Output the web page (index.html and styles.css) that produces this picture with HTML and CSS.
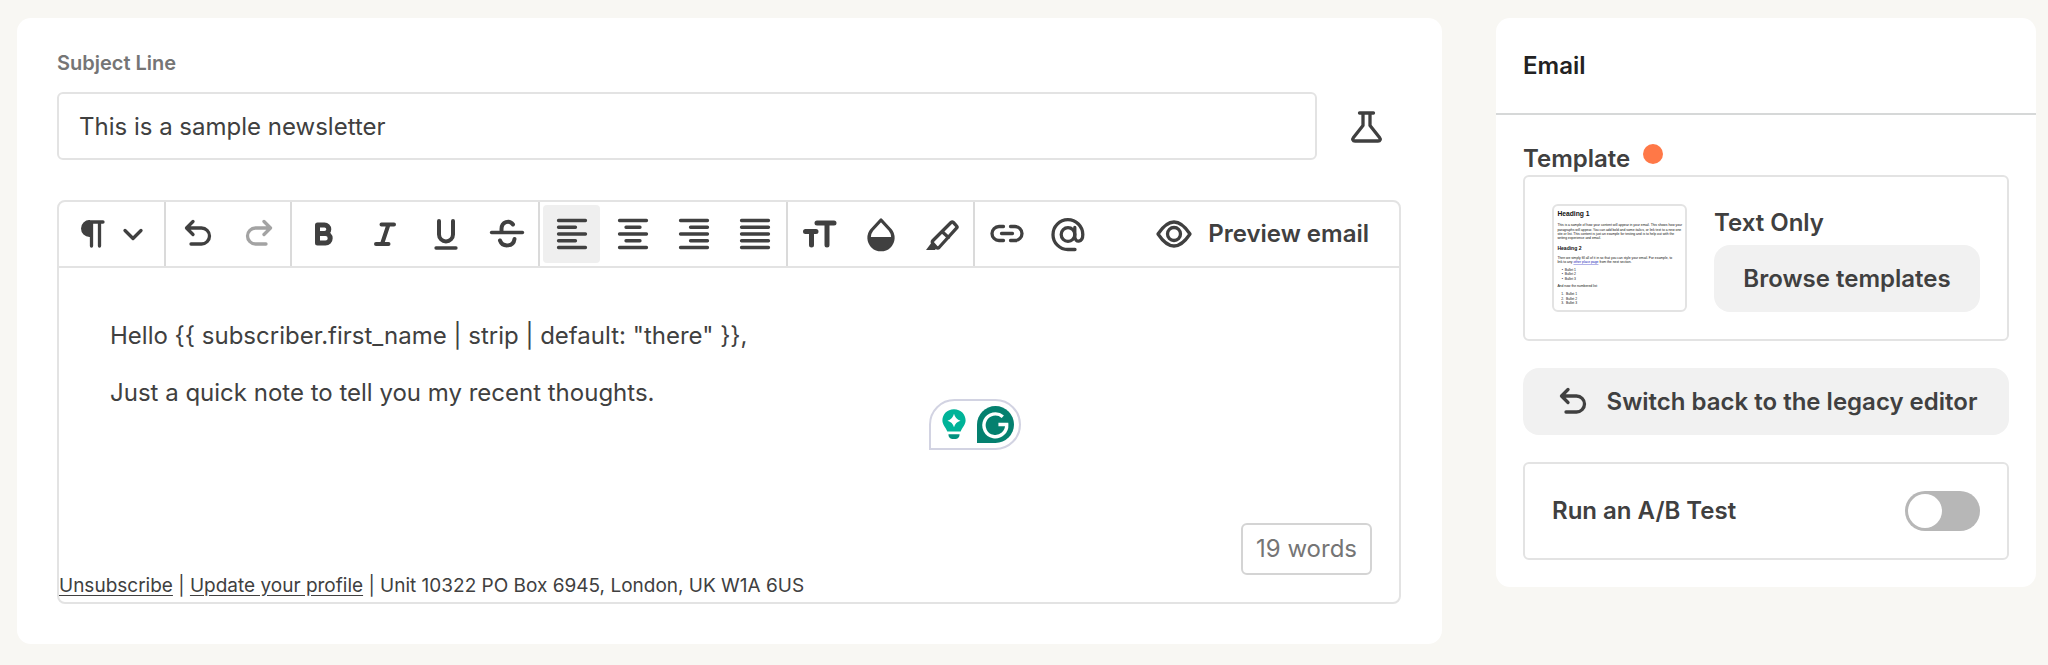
FILE: index.html
```html
<!DOCTYPE html>
<html lang="en">
<head>
<meta charset="utf-8">
<meta name="viewport" content="width=device-width, initial-scale=1">
<title>Newsletter editor</title>
<link rel="stylesheet" href="styles.css">
</head>
<body>
<div class="page">
  <main class="card composer">
    <label class="subject-label" for="subject">Subject Line</label>
    <div class="subject-row">
      <input class="subject-input" id="subject" type="text" value="This is a sample newsletter">
      <button class="flask-button" type="button" aria-label="Test subject line">
        <svg class="icon" viewBox="0 0 36 36"><path d="M10.500 5h14M14 5v12.500L4.500 29.500c-1.300 1.700-.8 3.500 1.500 3.500h23c2.300 0 2.800-1.800 1.500-3.500L21 17.500V5"/></svg>
      </button>
    </div>

    <section class="editor">
      <div class="toolbar" role="toolbar" aria-label="Formatting">
        <div class="group">
          <button class="tool tool-wide" type="button" aria-label="Paragraph style">
            <svg class="icon" viewBox="0 0 36 36"><path class="fill" d="M15 4h-.500a8.500 8.500 0 0 0 0 17H15z"/><path d="M14 6h14M16.500 6v24M24.500 6v24"/></svg>
            <svg class="icon chevron" viewBox="0 0 24 24"><path d="M4 8.500l8 8 8-8"/></svg>
          </button>
        </div>
        <div class="group">
          <button class="tool" type="button" aria-label="Undo"><svg class="icon" viewBox="0 0 36 36"><path d="M13 5.500L6.500 12l6.500 6.500M7 12h14.500a8 8 0 0 1 0 16H11"/></svg></button>
          <button class="tool" type="button" aria-label="Redo" disabled><svg class="icon" viewBox="0 0 36 36"><path d="M23 5.500l6.500 6.500-6.500 6.500M29 12H14.500a8 8 0 0 0 0 16H25"/></svg></button>
        </div>
        <div class="group">
          <button class="tool" type="button" aria-label="Bold"><svg class="icon" viewBox="0 0 36 36"><path class="heavy" d="M11.500 9v18h8a4.700 4.700 0 0 0 0-9.400h-8 7a4.300 4.300 0 0 0 0-8.600z"/></svg></button>
          <button class="tool" type="button" aria-label="Italic"><svg class="icon" viewBox="0 0 36 36"><path class="bold" d="M14.500 8.500h12.500M9 28h12.500M21.500 8.500L15 28"/></svg></button>
          <button class="tool" type="button" aria-label="Underline"><svg class="icon" viewBox="0 0 36 36"><path class="bold" d="M11 5v13.500a7 7 0 0 0 14 0V5"/><path d="M8 32h20"/></svg></button>
          <button class="tool" type="button" aria-label="Strikethrough"><svg class="icon" viewBox="0 0 36 36"><path d="M2.500 16.500h31"/><path class="bold" d="M12.500 14.500V13c0-7.500 8-9.500 11.500-4.500M11 24.500c2.500 7 13.500 6.500 14.500-1.500"/></svg></button>
        </div>
        <div class="group">
          <button class="tool active" type="button" aria-label="Align left" aria-pressed="true"><svg class="icon" viewBox="0 0 36 36"><path d="M4.500 4.500h27M4.500 11.250h17M4.500 18h27M4.500 24.750h17M4.500 31.500h27"/></svg></button>
          <button class="tool" type="button" aria-label="Align center"><svg class="icon" viewBox="0 0 36 36"><path d="M4.500 4.500h27M11 11.250h14M4.500 18h27M11 24.750h14M4.500 31.500h27"/></svg></button>
          <button class="tool" type="button" aria-label="Align right"><svg class="icon" viewBox="0 0 36 36"><path d="M4.500 4.500h27M14.500 11.250h17M4.500 18h27M14.500 24.750h17M4.500 31.500h27"/></svg></button>
          <button class="tool" type="button" aria-label="Justify"><svg class="icon" viewBox="0 0 36 36"><path d="M4.500 4.500h27M4.500 11.250h27M4.500 18h27M4.500 24.750h27M4.500 31.500h27"/></svg></button>
        </div>
        <div class="group">
          <button class="tool" type="button" aria-label="Text size"><svg class="icon" viewBox="0 0 36 36"><path class="heavy" d="M15 7h17M25 7v22M3.500 15.500h10.500M9.500 16v13"/></svg></button>
          <button class="tool" type="button" aria-label="Text color"><svg class="icon" viewBox="0 0 36 36"><path d="M18 4L8.800 14a12 12 0 1 0 18.400 0z"/><path class="fill" d="M6 21h24a12 12 0 0 1-24 0z"/></svg></button>
          <button class="tool" type="button" aria-label="Highlight"><svg class="icon" viewBox="0 0 36 36"><path d="M9 24.500L27 6.500q1.200-1.200 2.400 0l3.100 3.300q1.200 1.200 0 2.400L15 31.500q-1.200 1.200-2.400 0l-3.600-4q-1.400-1.500 0-3zM18.500 16l6 5.500"/><path class="fill" d="M8 26l5.500 5-2.500 3H2z"/></svg></button>
        </div>
        <div class="group">
          <button class="tool" type="button" aria-label="Link"><svg class="icon" viewBox="0 0 36 36"><path d="M14.500 10.500H10a7 7 0 0 0 0 14h4.500M21.500 10.500H26a7 7 0 0 1 0 14h-4.500M12.500 17.500h11"/></svg></button>
          <button class="tool" type="button" aria-label="Insert personalization"><svg class="icon" viewBox="0 0 36 36"><circle cx="18" cy="18.500" r="6.800"/><path d="M24.800 11.500v9c0 6.500 8 6.500 8-2A14.900 14.900 0 1 0 17.900 33.500h7.100"/></svg></button>
        </div>
        <button class="preview-button" type="button">
          <svg class="icon" viewBox="0 0 36 36"><path d="M2 18q16-24 32 0q-16 24-32 0z"/><circle cx="18" cy="18" r="6.500"/></svg>
          <span>Preview email</span>
        </button>
      </div>

      <div class="document">
        <div class="body-text" contenteditable="true" spellcheck="false">
          <p>Hello {{ subscriber.first_name | strip | default: "there" }},</p>
          <p>Just a quick note to tell you my recent thoughts.</p>
        </div>
        <div class="assistant">
          <svg class="assistant-bulb" viewBox="0 0 28 36"><path fill="#00b398" d="M14 1C6.500 1 1.500 6.600 1.500 13c0 5 3.500 7.500 5.300 12h14.400c1.800-4.500 5.300-7 5.300-12C26.500 6.600 21.500 1 14 1z"/><path fill="#fff" d="M14 6q1.500 6 7 7.500-5.500 1.500-7 7-1.500-5.500-7-7 5.500-1.500 7-7.500z"/><path fill="#02917f" d="M8 28h12c0 3-1.500 5-4 5h-4c-2.500 0-4-2-4-5z"/></svg>
          <svg class="assistant-logo" viewBox="0 0 38 38"><path fill="#04806f" d="M0 38V19a19 19 0 1 1 19 19z"/><path fill="none" stroke="#fff" stroke-width="3.500" d="M26.500 11A11.700 11.700 0 1 0 30.500 19H22"/></svg>
        </div>
        <div class="word-count">19 words</div>
        <p class="footer-text"><a href="#unsubscribe">Unsubscribe</a> | <a href="#profile">Update your profile</a> | Unit 10322 PO Box 6945, London, UK W1A 6US</p>
      </div>
    </section>
  </main>

  <aside class="card sidebar">
    <h2 class="sidebar-title">Email</h2>
    <div class="sidebar-body">
      <h3 class="template-title">Template <span class="dot"></span></h3>
      <div class="panel template-panel">
        <svg class="thumbnail" viewBox="0 0 540 432" role="img" aria-label="Text Only preview">
          <text class="thumb-h1" x="12" y="40">Heading 1</text>
          <text x="12" y="84">This is a sample of how your content will appear in your email. This shows how your</text>
          <text x="12" y="102">paragraphs will appear. You can add bold and some italics, or link text to a new one</text>
          <text x="12" y="120">site or list. This content is just an example for testing and is to help out with the</text>
          <text x="12" y="138">writing experience and email.</text>
          <text class="thumb-h2" x="12" y="182">Heading 2</text>
          <text x="12" y="219">Then we simply fill all of it in so that you can style your email. For example, to</text>
          <text x="12" y="237">link to any <tspan class="thumb-link">other place page</tspan> from the next section.</text>
          <text x="30" y="269">•&#160; Bullet 1</text>
          <text x="30" y="287">•&#160; Bullet 2</text>
          <text x="30" y="306">•&#160; Bullet 3</text>
          <text x="12" y="338">And now the numbered list</text>
          <text x="28" y="371">1.&#160; Bullet 1</text>
          <text x="28" y="390">2.&#160; Bullet 2</text>
          <text x="28" y="409">3.&#160; Bullet 3</text>
        </svg>
        <div class="template-info">
          <span class="template-name">Text Only</span>
          <button class="soft-button" type="button">Browse templates</button>
        </div>
      </div>
      <button class="soft-button legacy-button" type="button">
        <svg class="icon" viewBox="0 0 36 36"><path d="M13 5.500L6.500 12l6.500 6.500M7 12h14.500a8 8 0 0 1 0 16H11"/></svg>
        <span>Switch back to the legacy editor</span>
      </button>
      <label class="panel ab-panel" for="ab-test">
        <span>Run an A/B Test</span>
        <input class="toggle" id="ab-test" type="checkbox" role="switch">
      </label>
    </div>
  </aside>
</div>
</body>
</html>
```
FILE: styles.css
```css
* { box-sizing: border-box; }

body {
  margin: 0;
  background: #f8f7f3;
  color: #404040;
  font-family: Inter, "Liberation Sans", sans-serif;
  font-size: 24px;
  line-height: 32px;
}

button, input { font: inherit; color: inherit; }

button {
  border: 0;
  padding: 0;
  background: none;
  cursor: pointer;
}

.page {
  display: flex;
  align-items: flex-start;
  gap: 54px;
  padding: 18px 12px 19px 17px;
}

.card { background: #fff; border-radius: 14px; }

.composer { flex: 1; min-width: 0; padding: 29px 41px 40px 40px; }

.subject-label {
  display: block;
  margin-bottom: 13px;
  color: #757575;
  font-size: 20px;
  font-weight: 600;
}

.subject-row { display: flex; align-items: center; gap: 16px; }

.subject-input {
  flex: 1;
  min-width: 0;
  height: 68px;
  padding: 0 20px;
  border: 2px solid #e3e3e3;
  border-radius: 6px;
  background: #fff;
}

.flask-button {
  display: flex;
  align-items: center;
  justify-content: center;
  width: 68px;
  height: 68px;
}

.icon {
  flex: none;
  width: 36px;
  height: 36px;
  fill: none;
  stroke: currentColor;
  stroke-width: 3.3;
  stroke-linecap: round;
  stroke-linejoin: round;
}

.icon .bold { stroke-width: 4; }
.icon .heavy { stroke-width: 5; }
.icon .fill { fill: currentColor; stroke: none; }

.editor {
  margin-top: 40px;
  border: 2px solid #e3e3e3;
  border-radius: 8px;
}

.toolbar {
  display: flex;
  border-bottom: 2px solid #e3e3e3;
}

.group {
  display: flex;
  gap: 4px;
  padding: 3px;
  border-right: 2px solid #dadada;
}

.group:nth-last-child(2) { border-right: 0; }

.tool {
  display: flex;
  align-items: center;
  justify-content: center;
  width: 57px;
  height: 58px;
  border-radius: 4px;
}

.tool-wide { width: 99px; gap: 10px; padding-right: 4px; }
.tool:disabled { color: #a3a3a3; }
.active { background: #efefef; }
.chevron { width: 24px; height: 24px; }

.preview-button {
  display: flex;
  align-items: center;
  gap: 16px;
  margin-left: auto;
  padding: 0 30px;
  font-weight: 600;
}

.document { position: relative; padding: 52px 0 0; }

.body-text { min-height: 229px; padding: 0 51px; outline: 0; }
.body-text p { margin: 0 0 25px; }

.assistant {
  position: absolute;
  left: 870px;
  top: 131px;
  display: flex;
  align-items: center;
  gap: 10px;
  padding: 5px;
  padding-left: 10px;
  border: 2px solid #d2d3e2;
  border-radius: 26px 26px 26px 0;
  background: #fff;
}

.assistant-bulb { width: 26px; height: 34px; }
.assistant-logo { width: 37px; height: 37px; }

.word-count {
  position: absolute;
  right: 27px;
  bottom: 27px;
  padding: 8px 13px;
  border: 2px solid #d4d4d4;
  border-radius: 6px;
  background: #fff;
  color: #757575;
}

.footer-text { margin: 21px 0 0; font-size: 19px; }
.footer-text a { color: inherit; text-underline-offset: 3px; }

.sidebar { flex: none; width: 540px; }

.sidebar-title {
  margin: 0;
  padding: 32px 27px 31px;
  border-bottom: 2px solid #d6d8d8;
  color: #222;
  font-size: 24px;
  font-weight: 600;
}

.sidebar-body {
  display: flex;
  flex-direction: column;
  gap: 27px;
  padding: 28px 27px 27px;
}

.template-title {
  display: flex;
  gap: 13px;
  margin: 0 0 -27px;
  font-size: 24px;
  font-weight: 600;
}

.dot { width: 20px; height: 20px; margin-top: 1px; border-radius: 50%; background: #ff7847; }

.panel {
  display: flex;
  align-items: center;
  padding: 27px;
  border: 2px solid #e3e3e3;
  border-radius: 6px;
  font-weight: 600;
}

.template-panel { align-items: flex-end; gap: 27px; }

.thumbnail {
  flex: none;
  width: 135px;
  height: 108px;
  border: 2px solid #e3e3e3;
  border-radius: 6px;
  fill: #111;
  font-family: "Liberation Sans", sans-serif;
  font-size: 14px;
  font-weight: 400;
}

.thumb-h1 { font-size: 28px; font-weight: 700; }
.thumb-h2 { font-size: 21px; font-weight: 700; }
.thumb-link { fill: #1a1ab8; text-decoration: underline; }

.template-info { display: flex; flex: 1; flex-direction: column; gap: 6px; }

.soft-button {
  display: flex;
  align-items: center;
  justify-content: center;
  height: 67px;
  border-radius: 16px;
  background: #f1f1f1;
  font-weight: 600;
}

.legacy-button { gap: 16px; }

.ab-panel { justify-content: space-between; }

.toggle {
  appearance: none;
  display: flex;
  align-items: center;
  width: 75px;
  height: 40px;
  margin: 0;
  padding: 3px;
  border-radius: 20px;
  background: #b7b7b7;
  cursor: pointer;
}

.toggle::before {
  content: "";
  width: 34px;
  height: 34px;
  border-radius: 50%;
  background: #fff;
}

.toggle:checked { justify-content: flex-end; background: #404040; }
```
